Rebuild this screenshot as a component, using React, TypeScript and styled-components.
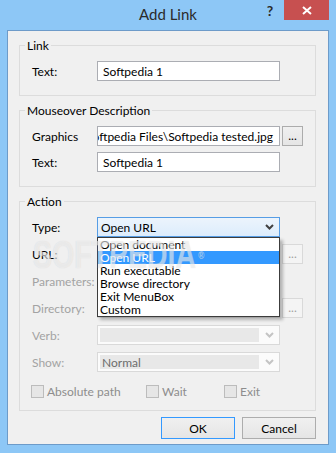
import React from "react";
import styled, { createGlobalStyle, css } from "styled-components";

const GlobalStyle = createGlobalStyle`
  html, body {
    margin: 0;
    padding: 0;
  }
  body {
    font-family: "Segoe UI", Lato, "Noto Sans", sans-serif;
    font-size: 12px;
    color: #000;
  }
  * {
    box-sizing: border-box;
  }
`;

const Window = styled.div`
  position: relative;
  width: 336px;
  height: 453px;
  padding-bottom: 8px;
  background: #8dc7f6;
  display: flex;
  flex-direction: column;
  overflow: hidden;
`;

const TitleBar = styled.div`
  height: 30px;
  flex: none;
  display: grid;
  grid-template-columns: 1fr auto 1fr;
`;

const Title = styled.div`
  grid-column: 2;
  font-size: 15px;
  line-height: 29px;
  color: #2b2b2b;
`;

const Controls = styled.div`
  justify-self: end;
  align-self: start;
  display: flex;
  margin-right: 7px;
`;

const HelpButton = styled.div`
  width: 28px;
  height: 20px;
  display: flex;
  align-items: center;
  justify-content: center;
  font-size: 14px;
  font-weight: 700;
  color: #2b2b2b;
`;

const CloseButton = styled.div`
  width: 45px;
  height: 20px;
  background: #c75050;
  display: flex;
  align-items: center;
  justify-content: center;
`;

const Client = styled.div`
  flex: 1;
  margin: 0 7px;
  border: 1px solid #6d9bc9;
  background: #f0f0f0;
  padding: 7px 12px 0 11px;
  display: flex;
  flex-direction: column;
  gap: 7px;
`;

const Group = styled.fieldset<{ $gap?: number; $padBottom?: number }>`
  margin: 0;
  min-width: 0;
  border: 1px solid #dcdcdc;
  padding: 8px 12px ${({ $padBottom }) => $padBottom ?? 14}px 12px;
  display: flex;
  flex-direction: column;
  gap: ${({ $gap }) => $gap ?? 6}px;
`;

const Legend = styled.legend`
  margin-left: -7px;
  padding: 0 2px;
  font-size: 12px;
  line-height: 15px;
  color: #000;
`;

const Row = styled.div`
  display: flex;
  align-items: center;
  height: 20px;
`;

const Label = styled.span<{ $disabled?: boolean }>`
  width: 65px;
  flex: none;
  white-space: nowrap;
  color: ${({ $disabled }) => ($disabled ? "#a3a3a3" : "#000")};
`;

const TextBox = styled.div<{ $disabled?: boolean; $end?: boolean }>`
  width: 183px;
  height: 20px;
  flex: none;
  padding: 0 6px 0 5px;
  display: flex;
  align-items: center;
  justify-content: ${({ $end }) => ($end ? "flex-end" : "flex-start")};
  overflow: hidden;
  white-space: nowrap;
  border: 1px solid ${({ $disabled }) => ($disabled ? "#d9d9d9" : "#abadb3")};
  background: ${({ $disabled }) => ($disabled ? "#f0f0f0" : "#fff")};
`;

const BrowseButton = styled.div<{ $disabled?: boolean }>`
  width: 21px;
  height: 20px;
  margin-left: 2px;
  flex: none;
  display: flex;
  align-items: center;
  justify-content: center;
  padding-bottom: 2px;
  border: 1px solid ${({ $disabled }) => ($disabled ? "#d9d9d9" : "#acacac")};
  background: ${({ $disabled }) =>
    $disabled ? "#f4f4f4" : "linear-gradient(#f0f0f0, #e5e5e5)"};
  color: ${({ $disabled }) => ($disabled ? "#a0a0a0" : "#000")};
`;

const ComboWrap = styled.div`
  position: relative;
  width: 183px;
  height: 20px;
  flex: none;
`;

const Combo = styled.div<{ $disabled?: boolean }>`
  height: 20px;
  display: flex;
  align-items: center;
  ${({ $disabled }) =>
    $disabled
      ? css`
          border: 1px solid #d9d9d9;
          background: #fbfbfb;
          padding: 2px 0 2px 2px;
          color: #6d6d6d;
        `
      : css`
          border: 1px solid #569de5;
          background: linear-gradient(#ecf4fc, #dcecfc);
          padding: 0 0 0 3px;
          color: #000;
        `}
`;

const ComboField = styled.div<{ $disabled?: boolean }>`
  flex: 1;
  height: 100%;
  display: flex;
  align-items: center;
  padding-left: ${({ $disabled }) => ($disabled ? "2px" : "0")};
  background: ${({ $disabled }) => ($disabled ? "#e8e8e8" : "transparent")};
`;

const ComboArrow = styled.div`
  width: 20px;
  flex: none;
  display: flex;
  align-items: center;
  justify-content: center;
`;

const DropList = styled.div`
  position: absolute;
  top: 100%;
  left: 0;
  width: 183px;
  z-index: 5;
  border: 1px solid #3c3c3c;
  background: #fff;
  box-shadow: 3px 3px 3px rgba(0, 0, 0, 0.25);
`;

const DropItem = styled.div<{ $selected?: boolean }>`
  height: 13px;
  line-height: 13px;
  padding-left: 2px;
  white-space: nowrap;
  background: ${({ $selected }) => ($selected ? "#3399ff" : "transparent")};
  color: ${({ $selected }) => ($selected ? "#fff" : "#000")};
`;

const CheckRow = styled.div`
  display: flex;
  align-items: center;
  height: 16px;
  margin-top: 4px;
  margin-left: -1px;
`;

const CheckItem = styled.div<{ $width?: number }>`
  display: flex;
  align-items: center;
  gap: 3px;
  width: ${({ $width }) => ($width ? `${$width}px` : "auto")};
  color: #8d8d8d;
`;

const CheckBox = styled.span`
  width: 13px;
  height: 13px;
  border: 1px solid #bcbcbc;
  background: #e6e6e6;
`;

const ButtonBar = styled.div`
  display: flex;
  justify-content: flex-end;
  gap: 7px;
  margin-top: -1px;
`;

const PushButton = styled.div<{ $default?: boolean }>`
  width: 74px;
  height: 22px;
  display: flex;
  align-items: center;
  justify-content: center;
  border: 1px solid ${({ $default }) => ($default ? "#3399ff" : "#adadad")};
  background: linear-gradient(#f0f0f0, #e5e5e5);
`;

const Watermark = styled.div`
  position: absolute;
  left: 33px;
  top: 236px;
  font-family: "Liberation Sans", sans-serif;
  font-weight: 700;
  font-size: 38px;
  line-height: 38px;
  white-space: nowrap;
  transform: scaleX(0.75);
  transform-origin: left top;
  color: rgba(255, 255, 255, 0.5);
  text-shadow: 0 0 1px rgba(150, 150, 150, 0.3);
  pointer-events: none;
  z-index: 10;

  sup {
    font-size: 11px;
    vertical-align: top;
    margin-left: 3px;
  }
`;

const Chevron = ({ color }: { color: string }) => (
  <svg width="9" height="6" viewBox="0 0 9 6">
    <path d="M1 1 L4.5 4.5 L8 1" fill="none" stroke={color} strokeWidth="2" />
  </svg>
);

const actions = [
  "Open document",
  "Open URL",
  "Run executable",
  "Browse directory",
  "Exit MenuBox",
  "Custom",
];

export default function App() {
  return (
    <>
      <GlobalStyle />
      <Window>
        <TitleBar>
          <Title>Add Link</Title>
          <Controls>
            <HelpButton>?</HelpButton>
            <CloseButton>
              <svg width="10" height="9" viewBox="0 0 10 9">
                <path d="M1 1 L9 8 M9 1 L1 8" stroke="#fff" strokeWidth="2" />
              </svg>
            </CloseButton>
          </Controls>
        </TitleBar>

        <Client>
          <Group>
            <Legend>Link</Legend>
            <Row>
              <Label>Text:</Label>
              <TextBox>Softpedia 1</TextBox>
            </Row>
          </Group>

          <Group>
            <Legend>Mouseover Description</Legend>
            <Row>
              <Label>Graphics</Label>
              <TextBox $end>C:\Softpedia Files\Softpedia tested.jpg</TextBox>
              <BrowseButton>...</BrowseButton>
            </Row>
            <Row>
              <Label>Text:</Label>
              <TextBox>Softpedia 1</TextBox>
            </Row>
          </Group>

          <Group $gap={7} $padBottom={11}>
            <Legend>Action</Legend>
            <Row>
              <Label>Type:</Label>
              <ComboWrap>
                <Combo>
                  <ComboField>Open URL</ComboField>
                  <ComboArrow>
                    <Chevron color="#404040" />
                  </ComboArrow>
                </Combo>
                <DropList>
                  {actions.map((a) => (
                    <DropItem key={a} $selected={a === "Open URL"}>
                      {a}
                    </DropItem>
                  ))}
                </DropList>
              </ComboWrap>
            </Row>
            <Row>
              <Label>URL:</Label>
              <TextBox $disabled />
              <BrowseButton $disabled>...</BrowseButton>
            </Row>
            <Row>
              <Label $disabled>Parameters:</Label>
              <TextBox $disabled />
            </Row>
            <Row>
              <Label $disabled>Directory:</Label>
              <TextBox $disabled />
              <BrowseButton $disabled>...</BrowseButton>
            </Row>
            <Row>
              <Label $disabled>Verb:</Label>
              <ComboWrap>
                <Combo $disabled>
                  <ComboField $disabled />
                  <ComboArrow>
                    <Chevron color="#c4c4c4" />
                  </ComboArrow>
                </Combo>
              </ComboWrap>
            </Row>
            <Row>
              <Label $disabled>Show:</Label>
              <ComboWrap>
                <Combo $disabled>
                  <ComboField $disabled>Normal</ComboField>
                  <ComboArrow>
                    <Chevron color="#c4c4c4" />
                  </ComboArrow>
                </Combo>
              </ComboWrap>
            </Row>
            <CheckRow>
              <CheckItem $width={115}>
                <CheckBox />
                Absolute path
              </CheckItem>
              <CheckItem $width={78}>
                <CheckBox />
                Wait
              </CheckItem>
              <CheckItem>
                <CheckBox />
                Exit
              </CheckItem>
            </CheckRow>
          </Group>

          <ButtonBar>
            <PushButton $default>OK</PushButton>
            <PushButton>Cancel</PushButton>
          </ButtonBar>
        </Client>

        <Watermark>
          SOFTPEDIA<sup>®</sup>
        </Watermark>
      </Window>
    </>
  );
}
